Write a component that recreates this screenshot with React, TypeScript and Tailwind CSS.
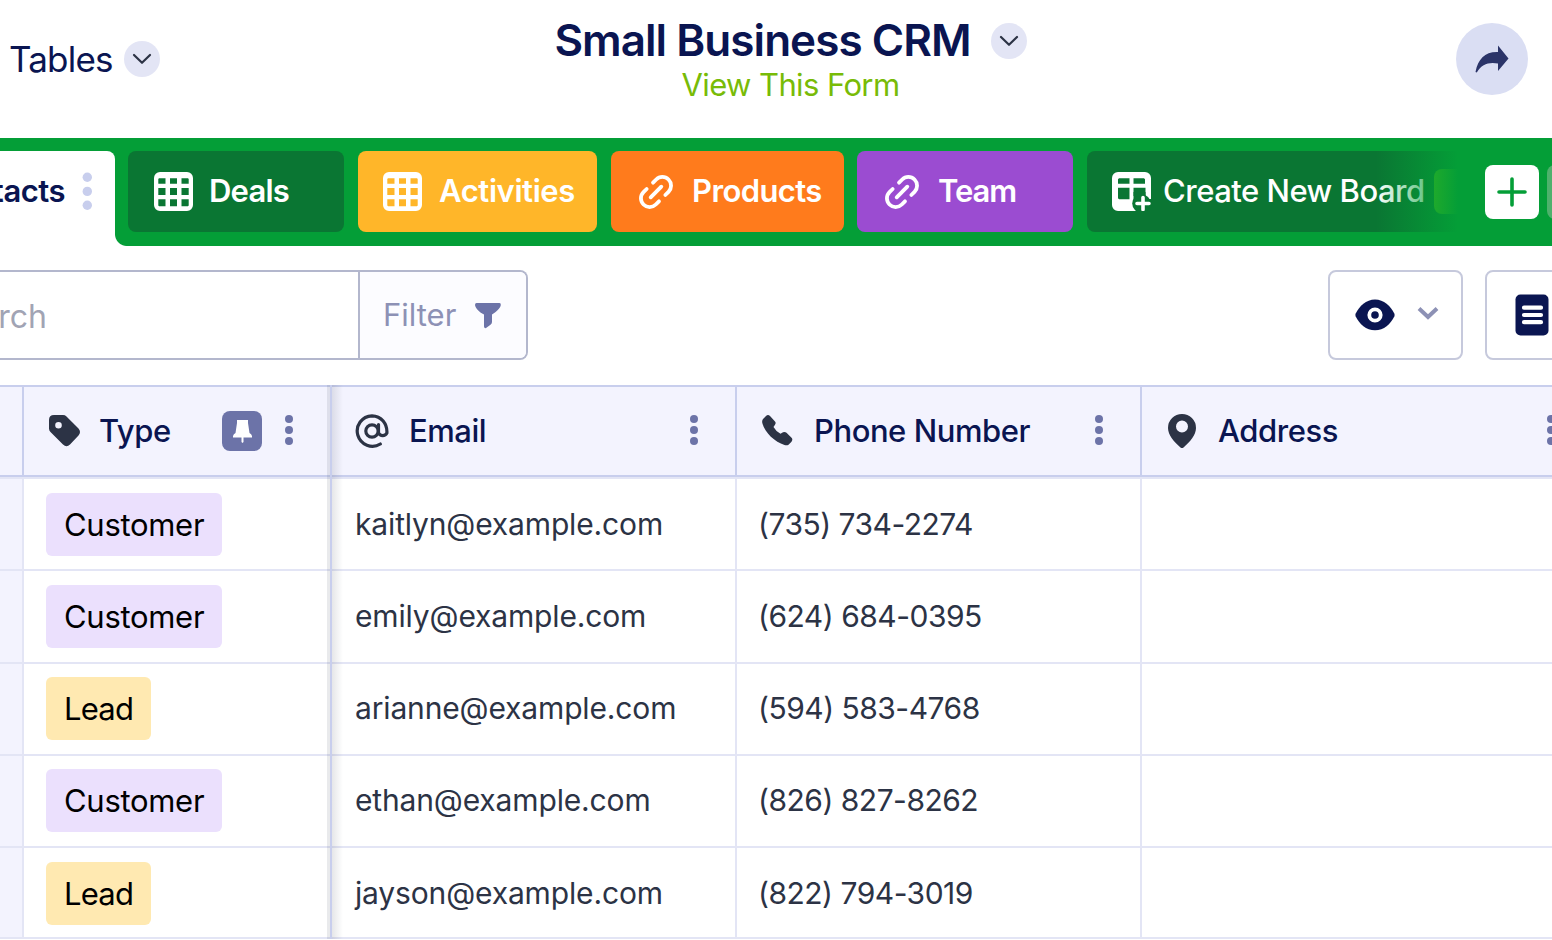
import { ReactNode } from "react";
import cx from "clsx";

type Row = {
  type: "Customer" | "Lead";
  email: string;
  phone: string;
  rowClass: string;
  padClass: string;
};

const rows: Row[] = [
  { type: "Customer", email: "kaitlyn@example.com", phone: "(735) 734-2274", rowClass: "h-[92px]", padClass: "pt-[14px]" },
  { type: "Customer", email: "emily@example.com", phone: "(624) 684-0395", rowClass: "h-[93px]", padClass: "pt-[14px]" },
  { type: "Lead", email: "arianne@example.com", phone: "(594) 583-4768", rowClass: "h-[92px]", padClass: "pt-[13px]" },
  { type: "Customer", email: "ethan@example.com", phone: "(826) 827-8262", rowClass: "h-[92px]", padClass: "pt-[13px]" },
  { type: "Lead", email: "jayson@example.com", phone: "(822) 794-3019", rowClass: "h-[91px]", padClass: "pt-[14px]" },
];

function Chevron() {
  return (
    <span className="flex size-9 shrink-0 items-center justify-center rounded-full bg-[#e3e5f5]">
      <svg width="20" height="12" viewBox="0 0 20 12" fill="none">
        <path d="M2 2l8 7.8L18 2" stroke="#2c3345" strokeWidth="2.2" strokeLinecap="round" strokeLinejoin="round" />
      </svg>
    </span>
  );
}

function Dots() {
  return (
    <svg width="8" height="30" viewBox="0 0 8 30" fill="#6c73a8" className="-mt-[2px] shrink-0">
      <circle cx="4" cy="4" r="4" />
      <circle cx="4" cy="15" r="4" />
      <circle cx="4" cy="26" r="4" />
    </svg>
  );
}

function GridIcon() {
  return (
    <svg width="39" height="39" viewBox="0 0 39 39" className="shrink-0">
      <path
        fill="#fff"
        fillRule="evenodd"
        d="M6 0h27a6 6 0 0 1 6 6v27a6 6 0 0 1-6 6H6a6 6 0 0 1-6-6V6a6 6 0 0 1 6-6ZM5 6.3h6.5v5.5H4.3V7zM16 6.3h7v5.5h-7zM27.5 6.3h6.5l.7.7v4.8h-7.2zM4.3 16h7.2v7H4.3zM16 16h7v7h-7zM27.5 16h7.2v7h-7.2zM4.3 27.2h7.2v7H5l-.7-.7zM16 27.2h7v7h-7zM27.5 27.2h7.2v6.3l-.7.7h-6.5z"
      />
    </svg>
  );
}

function LinkIcon() {
  return (
    <svg width="36" height="36" viewBox="-18 -18 36 36" fill="none" className="ml-px shrink-0">
      <g transform="rotate(-45)" stroke="#fff" strokeWidth="3.8" strokeLinecap="round">
        <path d="M-7.500 0H7.500" />
        <path d="M-4.500 8.700H-9a8.700 8.700 0 0 1 0-17.400H-4.500" />
        <path d="M4.500-8.700H9a8.700 8.700 0 0 1 0 17.400H4.500" />
      </g>
    </svg>
  );
}

function BoardIcon() {
  return (
    <svg width="39" height="39" viewBox="0 0 39 39" className="shrink-0">
      <path
        fill="#fff"
        fillRule="evenodd"
        d="M6 0h27a6 6 0 0 1 6 6v21h-6v12H6a6 6 0 0 1-6-6V6a6 6 0 0 1 6-6ZM7 6.300h10.500v5.500H6V7.300zM21.500 6.300h10.500l1 1v4.500H21.500zM6 15.800h11.500v11.500H7l-1-1zM21.500 15.800H33.500v12h-12z"
      />
      <circle cx="29.500" cy="31.500" r="9.300" fill="#0a7633" />
      <path d="M24.500 24h-3v-4h12v5z" fill="#0a7633" />
      <path d="M31 25.500v12M25 31.500h12" stroke="#fff" strokeWidth="3.600" strokeLinecap="round" />
    </svg>
  );
}

type BoardTabProps = {
  icon: ReactNode;
  label: string;
  className: string;
  labelClass: string;
};

function BoardTab({ icon, label, className, labelClass }: BoardTabProps) {
  return (
    <div className={cx("flex h-[81px] shrink-0 items-center rounded-lg text-white", className)}>
      {icon}
      <span className={cx("whitespace-nowrap text-[31px]", labelClass)}>{label}</span>
    </div>
  );
}

type HeaderCellProps = {
  icon: ReactNode;
  label: string;
  className: string;
  iconClass: string;
  children?: ReactNode;
};

function HeaderCell({ icon, label, className, iconClass, children }: HeaderCellProps) {
  return (
    <div className={cx("flex shrink-0 items-center border-r-2 border-[#c8ceed] py-px", className)}>
      <span className={cx("flex shrink-0 items-center", iconClass)}>{icon}</span>
      <span className="flex-1 whitespace-nowrap text-[31px] font-medium tracking-[-0.45px] text-[#0a1551]">{label}</span>
      {children}
    </div>
  );
}

export default function App() {
  return (
    <div className="flex h-[940px] w-[1552px] flex-col overflow-hidden bg-white font-['Inter',sans-serif] text-[#2c3345]">
      <header className="grid h-[138px] shrink-0 grid-cols-[160px_1fr_131px]">
        <div className="flex h-[118px] items-center justify-between pl-[9px] text-[#0a1551]">
          <span className="text-[35px] tracking-[-0.8px]">Tables</span>
          <Chevron />
        </div>
        <div className="flex flex-col items-center">
          <div className="flex h-[64px] items-center gap-5 pt-[18px]">
            <h1 className="-mt-[3px] whitespace-nowrap text-[44px] font-semibold tracking-[-0.95px] text-[#0a1551]">Small Business CRM</h1>
            <Chevron />
          </div>
          <a className="mt-px whitespace-nowrap text-[31px] leading-[40px] tracking-[-0.6px] text-[#78bb07]">View This Form</a>
        </div>
        <div className="pl-[35px] pt-[23px]">
          <button className="flex size-[72px] items-center justify-center rounded-full bg-[#dadef3]">
            <svg width="34" height="28" viewBox="0 0 34 28" fill="#2b3468">
              <path d="M23 0.500 33.500 13.500 23 26V18.500C14 16.800 6.500 19 1.800 27.500L.5 27C3 14 10 6.500 23 7Z" />
            </svg>
          </button>
        </div>
      </header>

      <nav className="flex h-[108px] shrink-0 bg-[#049e37] pt-[13px]">
        <div className="relative flex w-[115px] shrink-0 items-start justify-end rounded-tr-lg bg-white pr-[23px]">
          <span className="mr-[17px] mt-[17px] text-[31px] font-semibold tracking-[-0.5px] text-[#0a1551]">Contacts</span>
          <svg width="10" height="38" viewBox="0 0 10 38" fill="#c8ceed" className="mt-[21px] shrink-0">
            <circle cx="5.300" cy="5.300" r="4.700" />
            <circle cx="5.300" cy="19.400" r="4.700" />
            <circle cx="5.300" cy="33.300" r="4.700" />
          </svg>
          <span className="absolute -right-3 bottom-0 size-3 bg-[radial-gradient(circle_at_100%_0,transparent_11.5px,white_12.5px)]" />
        </div>
        <div className="relative ml-[13px] flex w-[1330px] shrink-0 overflow-hidden">
          <BoardTab icon={<GridIcon />} label="Deals" className="w-[216px] bg-[#0a7633] pl-[26px]" labelClass="ml-4 font-semibold tracking-[-0.8px]" />
          <BoardTab icon={<GridIcon />} label="Activities" className="ml-[14px] w-[239px] bg-[#ffb629] pl-[25px]" labelClass="ml-[17px] font-semibold tracking-[-0.4px]" />
          <BoardTab icon={<LinkIcon />} label="Products" className="ml-[14px] w-[233px] bg-[#ff7b1c] pl-[26px]" labelClass="ml-[18px] font-semibold tracking-[-0.6px]" />
          <BoardTab icon={<LinkIcon />} label="Team" className="ml-[13px] w-[216px] bg-[#9b4cd1] pl-[26px]" labelClass="ml-[18px] font-semibold tracking-[-1.1px]" />
          <BoardTab icon={<BoardIcon />} label="Create New Board" className="ml-[14px] w-[400px] bg-[#0a7633] pl-[25px]" labelClass="ml-[12px] font-medium tracking-[-0.5px]" />
          <span className="absolute left-[1306px] top-[18px] h-[45px] w-10 rounded-lg bg-[#5dc411]" />
          <span className="absolute right-0 top-0 h-full w-[82px] bg-linear-to-r from-[#049e37]/0 to-[#049e37]" />
        </div>
        <button className="ml-[27px] mt-[14px] flex size-[54px] shrink-0 items-center justify-center rounded-lg bg-white">
          <svg width="30" height="30" viewBox="0 0 30 30" stroke="#049e37" strokeWidth="3.600" strokeLinecap="round" className="-mt-px -ml-px">
            <path d="M15 2v26M2 15h26" />
          </svg>
        </button>
        <span className="ml-2 mt-[14px] h-[54px] w-[54px] shrink-0 rounded-lg bg-[#4fb16c]" />
      </nav>

      <div className="flex h-[139px] shrink-0 items-start pt-6">
        <div className="flex h-[90px] w-[528px] shrink-0 overflow-hidden rounded-r-lg border-2 border-l-0 border-[#b3b7cd]">
          <div className="flex w-[47px] items-center justify-end pt-[3px] text-[32px] text-[#a1a4b4]">Search</div>
          <div className="ml-auto flex w-[168px] items-center border-l-2 border-[#b3b7cd] bg-[#fcfcff] pl-[23px]">
            <span className="text-[31px] text-[#8d91b5]">Filter</span>
            <svg width="26" height="26" viewBox="0 0 26 26" fill="#6c73a8" className="ml-[19px] mt-px">
              <path d="M1.500 0H24.500Q26 0 25.800 2C25.500 5 21 9 17 11.500V19Q17 20.500 15.500 21.700L11 25Q9.300 25.600 9 23.500V11.500C4 9 .5 5 0 2Q0 0 1.500 0Z" />
            </svg>
          </div>
        </div>
        <div className="ml-[800px] flex h-[90px] w-[135px] shrink-0 items-center rounded-lg border-2 border-[#c6c9dc] pl-[25px]">
          <svg width="40" height="32" viewBox="0 0 40 32">
            <path d="M20 0.500C29 .5 35.500 7 39.300 14.500Q40 16 39.300 17.500C35.500 25 29 31.300 20 31.300S4.500 25 .7 17.500Q0 16 .7 14.500C4.500 7 11 .5 20 .5Z" fill="#0a1551" />
            <circle cx="20" cy="16" r="5.700" stroke="#fff" strokeWidth="3.800" fill="none" />
          </svg>
          <svg width="22" height="14" viewBox="0 0 22 14" className="-mt-1 ml-[22px]" fill="none">
            <path d="M2 2.500l9 8.500 9-8.500" stroke="#8d91b5" strokeWidth="4" />
          </svg>
        </div>
        <div className="ml-[22px] flex h-[90px] w-[135px] shrink-0 items-center rounded-lg border-2 border-[#c6c9dc] pl-[28px]">
          <svg width="34" height="42" viewBox="0 0 34 42">
            <rect x="0.500" y="0.500" width="33" height="41" rx="5" fill="#0a1551" />
            <path d="M9 13.700h17M9 21h17M9 28.200h17" stroke="#fff" strokeWidth="4.200" strokeLinecap="round" />
          </svg>
        </div>
      </div>

      <main className="relative w-[1600px]">
        <div className="flex h-[94px] border-b-2 border-t-2 border-[#c8ceed] border-b-[#e3e5f5] bg-[#f3f3fe]">
          <div className="flex h-full w-full border-b-2 border-[#c8ceed]">
            <div className="w-6 shrink-0 border-r-2 border-[#c8ceed]" />
            <HeaderCell
              label="Type"
              className="w-[308px] pl-[23px]"
              iconClass="w-[52px]"
              icon={
                <svg width="34" height="34" viewBox="-1 -1 34 34">
                  <path fill="#2c3345" fillRule="evenodd" d="M1 5Q1 0 6 0H15Q17 0 18.500 1.400L30.500 13.400Q33.500 17 30.500 20.500L22 29.500Q18.500 33 15 29.500L2.500 17Q1 15.500 1 13.500ZM10.500 7a3.300 3.300 0 1 0 0 6.600 3.300 3.300 0 0 0 0-6.600Z" />
                </svg>
              }
            >
              <span className="mr-[23px] flex size-10 shrink-0 items-center justify-center rounded-lg bg-[#6c73a8]">
                <svg width="19" height="23" viewBox="0 0 19 23" fill="#fff">
                  <path d="M4 0h11v3l1.500 10q2 1 2.500 3v1.500h-8.500V22l-1 1-1-1v-4.500H0V16q.5-2 2.500-3L4 3z" />
                </svg>
              </span>
              <span className="mr-[37px] flex">
                <Dots />
              </span>
            </HeaderCell>
            <HeaderCell
              label="Email"
              className="w-[405px] pl-[22px]"
              iconClass="w-[55px]"
              icon={
                <svg width="36" height="36" viewBox="0 0 36 36" fill="none" stroke="#2c3345" strokeWidth="3.200" strokeLinecap="round">
                  <circle cx="18" cy="18" r="6.200" />
                  <path d="M24.500 11.500v8.500a4.700 4.700 0 0 0 8.400 0c.5-9-5.500-17-14.900-17.200a15.200 15.200 0 1 0 8.300 28.200" />
                </svg>
              }
            >
              <span className="mr-[37px] flex">
                <Dots />
              </span>
            </HeaderCell>
            <HeaderCell
              label="Phone Number"
              className="w-[405px] pl-[23px]"
              iconClass="w-[54px]"
              icon={
                <svg width="34" height="34" viewBox="-2 -1 34 34">
                  <path fill="#2c3345" d="M4 1Q6-1 8 1L13 6.500Q14.300 8 13 9.700L11.500 12Q14 16.500 18.500 18.800L21 17.300Q23 16.400 24.500 17.800L29.800 23Q31 24.700 29.500 26.700L26.500 29.700Q25 30.600 22.500 30C13 27 3 18 .3 8Q-.2 5.500 1 4Z" />
                </svg>
              }
            >
              <span className="mr-[37px] flex">
                <Dots />
              </span>
            </HeaderCell>
            <HeaderCell
              label="Address"
              className="w-[450px] pl-[23px]"
              iconClass="w-[53px]"
              icon={
                <svg width="34" height="34" viewBox="-3 0 34 34">
                  <path fill="#2c3345" fillRule="evenodd" d="M14 0a14 14 0 0 1 14 14c0 7-6 14-12.500 19.500q-1.500 1-3 0C6 28 0 21 0 14A14 14 0 0 1 14 0Zm0 6.500a6 6 0 1 0 0 12 6 6 0 0 0 0-12Z" />
                </svg>
              }
            >
              <span className="mr-[35px] flex">
                <Dots />
              </span>
            </HeaderCell>
          </div>
        </div>
        {rows.map((row) => (
          <div key={row.email} className={cx("flex text-[30px] leading-[63px]", row.rowClass)}>
            <div className="w-6 shrink-0 border-b-2 border-r-2 border-[#e3e5f5] bg-[#f3f3fe]" />
            <div className={cx("w-[308px] shrink-0 border-b-2 border-r-2 border-[#e3e5f5] pl-[22px]", row.padClass)}>
              <span
                className={cx(
                  "block h-[63px] rounded-md pl-[18px] text-[31px] text-black",
                  row.type === "Customer" ? "w-[176px] bg-[#ebe0fd] tracking-[-0.3px]" : "w-[105px] bg-[#ffe9b1] tracking-[-0.8px]",
                )}
              >
                {row.type}
              </span>
            </div>
            <div className={cx("w-[405px] shrink-0 whitespace-nowrap border-b-2 border-r-2 border-[#e3e5f5] pl-[23px] tracking-[-0.15px]", row.padClass)}>
              {row.email}
            </div>
            <div className={cx("w-[405px] shrink-0 whitespace-nowrap border-b-2 border-r-2 border-[#e3e5f5] pl-[21px] tracking-[-0.5px]", row.padClass)}>
              {row.phone}
            </div>
            <div className="flex-1 border-b-2 border-[#e3e5f5]" />
          </div>
        ))}
        {/* edge of the pinned columns */}
        <div className="absolute bottom-0 left-[327px] top-0 flex">
          <span className="w-[3px] bg-[#2c3345]/10" />
          <span className="w-[2px] bg-[#c8ceed]" />
          <span className="w-[11px] bg-linear-to-r from-[#2c3345]/12 to-[#2c3345]/0" />
        </div>
      </main>
    </div>
  );
}
